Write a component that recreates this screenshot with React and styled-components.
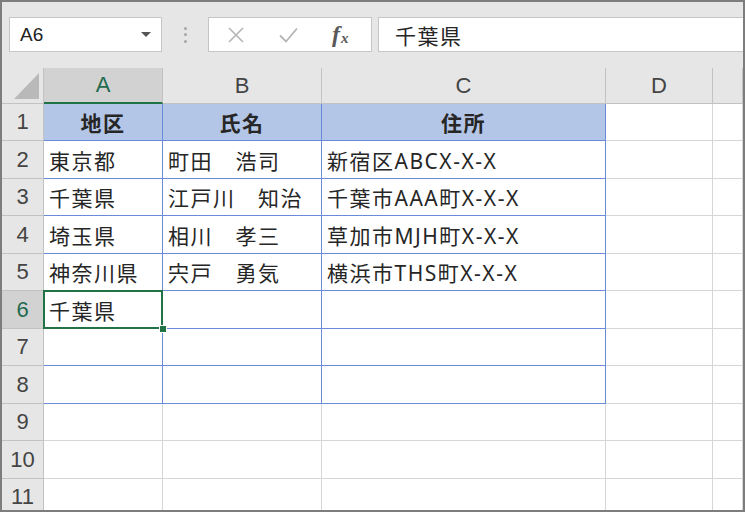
import React from 'react';
import styled, { createGlobalStyle, css } from 'styled-components';

const GREEN = '#217346';
const BLUE = '#6a8bd8';
const GRID = '#d6d6d6';
const HEAD_BG = '#e6e6e6';
const HEAD_SEL = '#d2d2d2';
const HEAD_LINE = '#c2c2c2';

const Global = createGlobalStyle`
  html, body { margin: 0; padding: 0; background: #fff; }
  #root { width: 745px; height: 512px; }
`;

const Frame = styled.div`
  width: 745px;
  height: 512px;
  box-sizing: border-box;
  border: 2px solid #7d7d7d;
  background: ${HEAD_BG};
  display: flex;
  flex-direction: column;
  overflow: hidden;
  font-family: "Noto Sans", "Noto Sans CJK JP", sans-serif;
`;

const Toolbar = styled.div`
  height: 66px;
  flex: none;
  box-sizing: border-box;
  padding: 15px 0 0 7px;
  display: flex;
  align-items: flex-start;
`;

const NameBox = styled.div`
  width: 153px;
  height: 35px;
  box-sizing: border-box;
  background: #fff;
  border: 1px solid #c6c6c6;
  display: flex;
  align-items: center;
  justify-content: space-between;
  padding: 0 10px 0 10px;
  font-family: "Liberation Sans", sans-serif;
  font-size: 19px;
  color: #222;
`;

const Caret = styled.span`
  width: 0;
  height: 0;
  border-left: 5px solid transparent;
  border-right: 5px solid transparent;
  border-top: 5px solid #555;
`;

const Dots = styled.div`
  width: 46px;
  height: 35px;
  display: flex;
  flex-direction: column;
  align-items: center;
  justify-content: center;
  gap: 3.5px;
`;

const Dot = styled.span`
  width: 3px;
  height: 3px;
  border-radius: 50%;
  background: #a6a6a6;
`;

const FxBox = styled.div`
  width: 164px;
  height: 35px;
  box-sizing: border-box;
  background: #fff;
  border: 1px solid #c6c6c6;
  display: flex;
  align-items: center;
  padding-left: 19px;
  gap: 35px;
`;

const FxLabel = styled.span`
  font-family: "Liberation Serif", serif;
  font-style: italic;
  font-weight: bold;
  font-size: 24px;
  color: #595959;
  line-height: 1;
  margin-left: -1px;
  margin-top: -2px;
  sub {
    font-size: 15px;
    vertical-align: baseline;
    position: relative;
    top: 1px;
    margin-left: 1px;
  }
`;

const FormulaInput = styled.div`
  flex: 1;
  margin-left: 6px;
  height: 35px;
  box-sizing: border-box;
  background: #fff;
  border: 1px solid #c6c6c6;
  border-right: none;
  display: flex;
  align-items: center;
  padding-left: 16px;
  font-size: 21px;
  letter-spacing: 1.5px;
  color: #262626;
`;

const ROWS = [37, 38, 37, 38, 37, 38, 37, 38, 37, 38, 37];

const Sheet = styled.div`
  flex: 1;
  display: grid;
  grid-template-columns: 42px 119px 159px 284px 107px 1fr;
  grid-template-rows: 36px ${ROWS.map((h) => `${h}px`).join(' ')};
  background: #fff;
  overflow: hidden;
`;

const Corner = styled.div`
  background: ${HEAD_BG};
  border-right: 1px solid ${HEAD_LINE};
  border-bottom: 1px solid ${HEAD_LINE};
  box-sizing: border-box;
  display: flex;
  justify-content: flex-end;
  align-items: flex-end;
  padding: 0 4px 4px 0;
`;

const ColHeader = styled.div`
  background: ${(p) => (p.$selected ? HEAD_SEL : HEAD_BG)};
  border-right: 1px solid ${HEAD_LINE};
  border-bottom: ${(p) => (p.$selected ? `2px solid ${GREEN}` : `1px solid ${HEAD_LINE}`)};
  box-sizing: border-box;
  display: flex;
  align-items: center;
  justify-content: center;
  font-family: "Liberation Sans", sans-serif;
  font-size: 22px;
  color: ${(p) => (p.$selected ? '#1f6b4e' : '#444')};
`;

const RowHeader = styled.div`
  background: ${(p) => (p.$selected ? HEAD_SEL : HEAD_BG)};
  border-right: 1px solid ${HEAD_LINE};
  border-bottom: 1px solid ${HEAD_LINE};
  box-sizing: border-box;
  display: flex;
  align-items: center;
  justify-content: center;
  font-family: "Liberation Sans", sans-serif;
  font-size: 22px;
  color: ${(p) => (p.$selected ? '#1f6b4e' : '#444')};
`;

const Cell = styled.div`
  position: relative;
  box-sizing: border-box;
  border-right: 1px solid ${(p) => (p.$table ? BLUE : GRID)};
  border-bottom: 1px solid ${(p) => (p.$table ? BLUE : GRID)};
  background: ${(p) => (p.$head ? '#b4c6e7' : '#fff')};
  display: flex;
  align-items: center;
  justify-content: ${(p) => (p.$head ? 'center' : 'flex-start')};
  padding-left: ${(p) => (p.$head ? '0' : '5px')};
  font-size: 21px;
  font-weight: ${(p) => (p.$head ? 700 : 400)};
  letter-spacing: 1.5px;
  color: #262626;
  white-space: pre;
  ${(p) =>
    p.$selected &&
    css`
      &::after {
        content: '';
        position: absolute;
        top: -1px;
        left: -1px;
        right: -1px;
        bottom: -1px;
        border: 2px solid ${GREEN};
        z-index: 2;
        pointer-events: none;
      }
      &::before {
        content: '';
        position: absolute;
        right: -5px;
        bottom: -5px;
        width: 6px;
        height: 6px;
        background: ${GREEN};
        border: 1px solid #fff;
        z-index: 3;
      }
    `}
`;

const COLS = ['A', 'B', 'C', 'D', ''];

const DATA = [
  ['地区', '氏名', '住所'],
  ['東京都', '町田　浩司', '新宿区ABCX-X-X'],
  ['千葉県', '江戸川　知治', '千葉市AAA町X-X-X'],
  ['埼玉県', '相川　孝三', '草加市MJH町X-X-X'],
  ['神奈川県', '宍戸　勇気', '横浜市THS町X-X-X'],
  ['千葉県', '', ''],
  ['', '', ''],
  ['', '', ''],
];

export default function App() {
  return (
    <>
      <Global />
      <Frame>
        <Toolbar>
          <NameBox>
            <span>A6</span>
            <Caret />
          </NameBox>
          <Dots>
            <Dot />
            <Dot />
            <Dot />
          </Dots>
          <FxBox>
            <svg width="16" height="16" viewBox="0 0 16 16">
              <path d="M1 1 L15 15 M15 1 L1 15" stroke="#b5b5b5" strokeWidth="1.6" fill="none" />
            </svg>
            <svg width="19" height="16" viewBox="0 0 19 16">
              <path d="M1 8.5 L7 14.5 L18 1.5" stroke="#b5b5b5" strokeWidth="1.8" fill="none" />
            </svg>
            <FxLabel>
              f<sub>x</sub>
            </FxLabel>
          </FxBox>
          <FormulaInput>千葉県</FormulaInput>
        </Toolbar>
        <Sheet>
          <Corner>
            <svg width="25" height="26" viewBox="0 0 25 26">
              <polygon points="25,0 25,26 0,26" fill="#b9b9b9" />
            </svg>
          </Corner>
          {COLS.map((c, i) => (
            <ColHeader key={`h${i}`} $selected={c === 'A'}>
              {c}
            </ColHeader>
          ))}
          {ROWS.map((_, r) => {
            const rowNum = r + 1;
            const vals = DATA[r];
            return (
              <React.Fragment key={`r${r}`}>
                <RowHeader $selected={rowNum === 6}>{rowNum}</RowHeader>
                {[0, 1, 2, 3, 4].map((c) => {
                  const inTable = !!vals && c < 3;
                  return (
                    <Cell
                      key={`c${r}-${c}`}
                      $table={inTable}
                      $head={inTable && r === 0}
                      $selected={rowNum === 6 && c === 0}
                    >
                      {inTable ? vals[c] : ''}
                    </Cell>
                  );
                })}
              </React.Fragment>
            );
          })}
        </Sheet>
      </Frame>
    </>
  );
}
